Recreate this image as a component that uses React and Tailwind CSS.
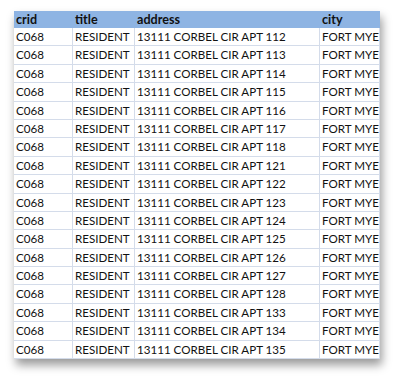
import React from "react";

const rows = [
  "112", "113", "114", "115", "116", "117", "118", "121", "122",
  "123", "124", "125", "126", "127", "128", "133", "134", "135",
];

const cols = "grid grid-cols-[59px_62px_185px_60px]";
const cell = "px-[2px] whitespace-nowrap overflow-hidden border-r border-[#d4dcea] flex items-center";

const App = () => {
  return (
    <div className="w-[400px] h-[382px] bg-white pl-[14px] pt-[11px] font-['Lato','Liberation_Sans',sans-serif] text-[11.6px] text-[#111]">
      <div className="w-[366px] overflow-hidden bg-white shadow-[2px_6px_9px_rgba(0,0,0,0.4)]">
        <div className={`${cols} h-[17px] bg-[#8eb4e3] font-bold text-[12.6px]`}>
          <div className="px-[2px] flex items-center">crid</div>
          <div className="px-[2px] flex items-center">title</div>
          <div className="px-[2px] flex items-center">address</div>
          <div className="px-[2px] flex items-center">city</div>
        </div>
        {rows.map((apt) => (
          <div key={apt} className={`${cols} h-[18.4px] border-b border-[#d4dcea]`}>
            <div className={cell}>C068</div>
            <div className={cell}>RESIDENT</div>
            <div className={cell}>13111 CORBEL CIR APT {apt}</div>
            <div className={cell}>FORT MYERS</div>
          </div>
        ))}
      </div>
    </div>
  );
};

export default App;
